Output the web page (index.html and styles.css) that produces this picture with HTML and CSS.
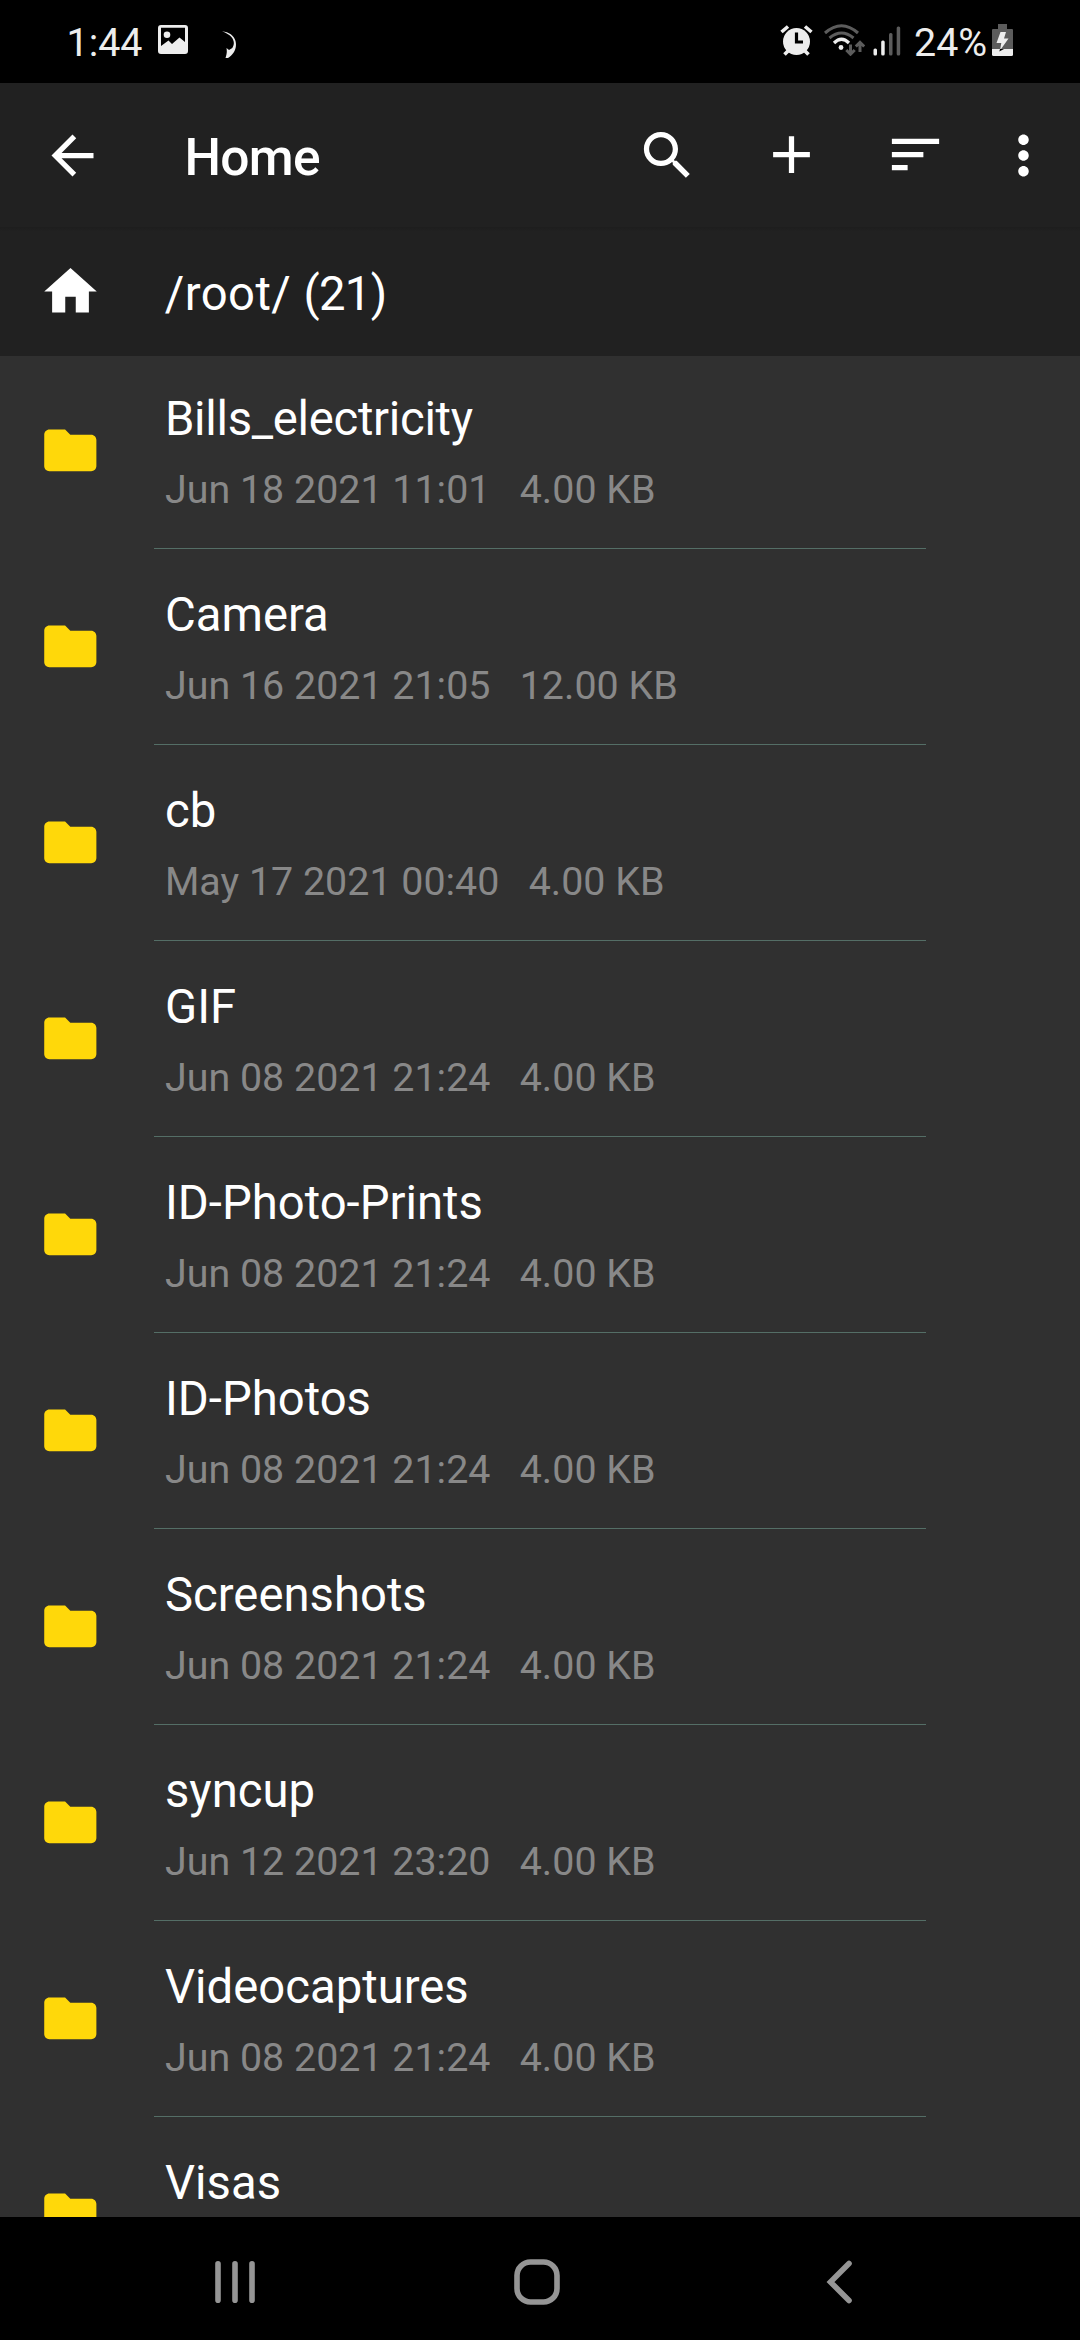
FILE: index.html
```html
<!DOCTYPE html>
<html lang="en">
<head>
<meta charset="utf-8">
<title>Home</title>
<link rel="stylesheet" href="styles.css">
</head>
<body>
<svg class="defs" aria-hidden="true">
  <symbol id="folder" viewBox="0 0 24 24"><path d="M10 4H4c-1.1 0-1.99.9-1.99 2L2 18c0 1.100.9 2 2 2h16c1.100 0 2-.9 2-2V8c0-1.100-.9-2-2-2h-8l-2-2z"/></symbol>
</svg>
<div class="screen">
  <header class="status">
    <span class="clock">1:44</span>
    <svg class="st-image" width="30" height="29" viewBox="0 0 30 29"><path fill-rule="evenodd" d="M3 0H27Q30 0 30 3V26Q30 29 27 29H3Q0 29 0 26V3Q0 0 3 0ZM3 2.800V21L10.500 15.500L14 19L21.500 12.500L27 17V2.800Z"/><circle cx="9" cy="9.700" r="3.300"/></svg>
    <svg class="st-moon" width="15" height="28" viewBox="0 0 15 28"><path d="M0 0.300C7 1 12 4.500 13.500 10C15.500 18 11 24 6 27H3.500C5 23 5 20 4.500 17L7 19L10.300 17C13.500 12 12.500 5 0 0.300Z"/></svg>
    <div class="status-right">
      <svg class="st-alarm" width="33" height="31" viewBox="0 0 33 31"><circle cx="16.500" cy="16.500" r="13.500"/><path class="line" d="M1.500 7L8 1.500M31.500 7L25 1.500M8 26L4.500 29.500M25 26L28.500 29.500" stroke-width="3.600"/><path d="M16.500 7.500V17H23" fill="none" stroke="#000" stroke-width="3.200"/></svg>
      <svg class="st-wifi" width="41" height="32" viewBox="0 0 41 32"><g fill="none" stroke="#5c5c5c" stroke-width="3"><path d="M1 9Q17.500 -5.500 34 9"/><path d="M5.500 14Q17.500 4 29.500 14"/><path d="M26.500 20.500V30M22.300 26L26.500 30.200L30.700 26M36 28V18.500M31.800 22.500L36 18.300L40.200 22.500"/></g><path class="line" d="M10 19Q17.500 11.500 25 19" stroke-width="3.200"/><circle cx="17" cy="23.500" r="2.400"/></svg>
      <svg class="st-signal" width="28" height="30" viewBox="0 0 28 30"><rect x="0.500" y="22.500" width="3.500" height="7" rx="1.500"/><rect x="8.200" y="14.500" width="3.500" height="15" rx="1.500"/><g fill="#5c5c5c"><rect x="16" y="7" width="3.500" height="22.500" rx="1.500"/><rect x="23.700" y="0.500" width="3.500" height="29" rx="1.500"/></g></svg>
      <span class="percent">24%</span>
      <svg class="st-battery" width="21" height="32" viewBox="0 0 21 32"><path fill="#5c5c5c" d="M6 0H15V5H20Q21 5 21 6V25H0V6Q0 5 1 5H6Z"/><path d="M0 25H21V30.500Q21 32 19.500 32H1.500Q0 32 0 30.500Z"/><path d="M8.500 8H14L12 14.500H16.500L8 26.500L9.300 19H4.500Z"/><path d="M7.300 27.500L12 25H8Z" fill="#000"/></svg>
    </div>
  </header>

  <div class="appbar">
    <svg class="icon back" viewBox="0 0 24 24"><path d="M20 11H7.830l5.590-5.590L12 4l-8 8 8 8 1.410-1.410L7.830 13H20v-2z"/></svg>
    <h1 class="title">Home</h1>
    <svg class="icon search" viewBox="0 0 24 24"><path d="M15.500 14h-.79l-.28-.27C15.410 12.590 16 11.110 16 9.500 16 5.910 13.090 3 9.500 3S3 5.910 3 9.500 5.910 16 9.500 16c1.610 0 3.090-.59 4.230-1.570l.27.28v.79l5 4.990L20.490 19l-4.990-5zm-6 0C7.010 14 5 11.990 5 9.500S7.010 5 9.500 5 14 7.010 14 9.500 11.990 14 9.500 14z"/></svg>
    <svg class="icon add" viewBox="0 0 24 24"><path d="M19 13h-6v6h-2v-6H5v-2h6V5h2v6h6v2z"/></svg>
    <svg class="icon sort" viewBox="0 0 24 24"><path d="M3 18h6v-2H3v2zM3 6v2h18V6H3zm0 7h12v-2H3v2z"/></svg>
    <svg class="icon more" viewBox="0 0 24 24"><path d="M12 8c1.100 0 2-.9 2-2s-.9-2-2-2-2 .9-2 2 .9 2 2 2zm0 2c-1.100 0-2 .9-2 2s.9 2 2 2 2-.9 2-2-.9-2-2-2zm0 6c-1.100 0-2 .9-2 2s.9 2 2 2 2-.9 2-2-.9-2-2-2z"/></svg>
  </div>

  <div class="pathbar">
    <svg class="icon" viewBox="0 0 24 24"><path d="M10 20v-6h4v6h5v-8h3L12 3 2 12h3v8z"/></svg>
    <span class="path">/root/ <span class="count">(21)</span></span>
  </div>

  <main class="list">
    <div class="row"><svg class="folder"><use href="#folder"/></svg><div class="body"><div class="name tight">Bills_electricity</div><div class="meta">Jun 18 2021 11:01   4.00 KB</div></div></div>
    <div class="row"><svg class="folder"><use href="#folder"/></svg><div class="body"><div class="name">Camera</div><div class="meta">Jun 16 2021 21:05   12.00 KB</div></div></div>
    <div class="row"><svg class="folder"><use href="#folder"/></svg><div class="body"><div class="name">cb</div><div class="meta">May 17 2021 00:40   4.00 KB</div></div></div>
    <div class="row"><svg class="folder"><use href="#folder"/></svg><div class="body"><div class="name">GIF</div><div class="meta">Jun 08 2021 21:24   4.00 KB</div></div></div>
    <div class="row"><svg class="folder"><use href="#folder"/></svg><div class="body"><div class="name">ID-Photo-Prints</div><div class="meta">Jun 08 2021 21:24   4.00 KB</div></div></div>
    <div class="row"><svg class="folder"><use href="#folder"/></svg><div class="body"><div class="name">ID-Photos</div><div class="meta">Jun 08 2021 21:24   4.00 KB</div></div></div>
    <div class="row"><svg class="folder"><use href="#folder"/></svg><div class="body"><div class="name">Screenshots</div><div class="meta">Jun 08 2021 21:24   4.00 KB</div></div></div>
    <div class="row"><svg class="folder"><use href="#folder"/></svg><div class="body"><div class="name">syncup</div><div class="meta">Jun 12 2021 23:20   4.00 KB</div></div></div>
    <div class="row"><svg class="folder"><use href="#folder"/></svg><div class="body"><div class="name">Videocaptures</div><div class="meta">Jun 08 2021 21:24   4.00 KB</div></div></div>
    <div class="row"><svg class="folder"><use href="#folder"/></svg><div class="body"><div class="name">Visas</div></div></div>
  </main>

  <nav class="navbar">
    <svg class="recents" width="42" height="46" viewBox="0 0 42 46"><path d="M4 4.700V41.300M21 4.700V41.300M38 4.700V41.300" stroke-linecap="round"/></svg>
    <svg class="home" width="46" height="46" viewBox="0 0 46 46"><rect x="3" y="3" width="40" height="40" rx="13.500"/></svg>
    <svg class="prev" width="28" height="46" viewBox="0 0 28 46"><path d="M24 4.500L5.500 23L24 41.500" stroke-linecap="round"/></svg>
  </nav>
</div>
</body>
</html>
```

FILE: styles.css
```css
* { box-sizing: border-box; }

body {
  margin: 0;
  background: #000;
  font-family: Roboto, sans-serif;
}

svg { display: block; flex: none; fill: #fff; }

.defs { display: none; }

.screen {
  width: 1080px;
  height: 2340px;
  display: flex;
  flex-direction: column;
  overflow: hidden;
}

/* system status bar */
.status {
  height: 83px;
  flex: none;
  display: flex;
  align-items: flex-start;
  padding: 0 67px 0 66.500px;
  color: #ededed;
  font-size: 39.4px;
  line-height: 46px;
}
.status svg { fill: #ededed; }
.status .line { fill: none; stroke: #ededed; }
.clock, .percent { margin-top: 20px; }
.clock { width: 91.500px; }
.st-image { margin-top: 25px; }
.st-moon { margin: 31px 0 0 34px; }
.status-right { display: flex; margin-left: auto; }
.st-alarm { margin-top: 25px; }
.st-wifi { margin: 24px 0 0 11px; }
.st-signal { margin: 26px 0 0 8px; }
.percent { width: 78px; margin-left: 13px; }
.st-battery { margin-top: 24px; }

/* toolbar */
.icon { width: 63px; height: 63px; }
.appbar {
  height: 144px;
  flex: none;
  display: flex;
  align-items: center;
  padding-left: 41px;
  background: #212121;
  color: #fff;
}
.title {
  margin: 6px auto 0 80.500px;
  font-size: 51.500px;
  font-weight: 500;
  line-height: 60px;
  letter-spacing: -.7px;
}
.add { margin: 0 0 2px 61px; }
.sort { margin: 0 0 2px 61px; }
.more { margin: 0 25px 0 45.300px; }

.pathbar {
  height: 129px;
  flex: none;
  display: flex;
  align-items: center;
  padding-left: 38.500px;
  background: linear-gradient(#1e1e1e, #212121 5px);
  color: #fff;
}
.path {
  margin: 5px 0 0 63.200px;
  font-size: 47.250px;
  line-height: 56px;
  letter-spacing: .45px;
}
.count { letter-spacing: -.7px; }

/* file list */
.list {
  height: 1861px;
  flex: none;
  overflow: hidden;
  background: #303030;
}
.row {
  height: 196px;
  display: flex;
  align-items: center;
  padding-left: 38.500px;
}
.row:first-child { margin-top: -3px; }
.folder { width: 62.600px; height: 62.600px; margin-bottom: 2px; fill: #ffd80a; }
.body {
  width: 772px;
  height: 196px;
  margin-left: 52.900px;
  padding: 38px 0 0 11px;
  border-bottom: 1px solid #546e66;
}
.name {
  color: #fff;
  font-size: 47.250px;
  line-height: 56px;
}
.tight { letter-spacing: -.3px; }
.meta {
  margin-top: 20px;
  color: #888;
  font-size: 39.400px;
  line-height: 46px;
  white-space: pre;
}

/* system navigation */
.navbar {
  height: 123px;
  display: flex;
  align-items: center;
  padding: 7px 0 0 214px;
  background: #000;
}
.navbar svg { fill: none; stroke: #959595; stroke-width: 5.600; }
.home { margin-left: 258px; }
.prev { margin-left: 265px; }
```
